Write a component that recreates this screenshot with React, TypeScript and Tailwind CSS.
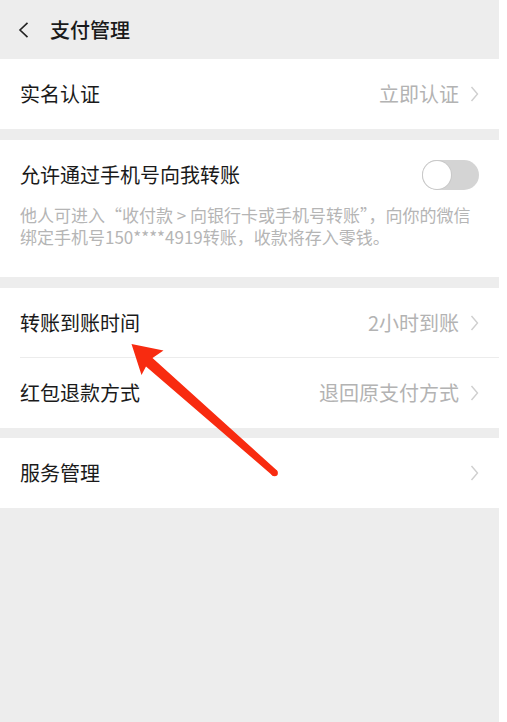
import React from "react";

const font = { fontFamily: '"Noto Sans CJK SC", "Noto Sans", sans-serif' };

function Chevron() {
  return (
    <svg width="9" height="16" viewBox="0 0 9 16" className="ml-[11px] shrink-0">
      <path d="M1.5 1 L7.5 8 L1.5 15" fill="none" stroke="#cfcfcf" strokeWidth="1.4" />
    </svg>
  );
}

function Row({ label, value, divider }: { label: string; value?: string; divider?: boolean }) {
  return (
    <div className="relative flex h-[70px] items-center pl-[20px] pr-[20px]">
      <span className="text-[20px] text-[#1a1a1a] leading-none">{label}</span>
      <span className="ml-auto text-[20px] text-[#b3b3b3] leading-none">{value}</span>
      <Chevron />
      {divider && <div className="absolute bottom-0 left-[20px] right-0 h-px bg-[#ececec]" />}
    </div>
  );
}

export default function App() {
  return (
    <div className="w-[507px] min-h-[722px] bg-white" style={font}>
      <div className="relative w-[499px] min-h-[722px] bg-[#ededed]">
        {/* header */}
        <div className="flex h-[59px] items-center pl-[18px]">
          <svg width="11" height="16" viewBox="0 0 11 16">
            <path d="M9.5 0.8 L2 8 L9.5 15.2" fill="none" stroke="#222" strokeWidth="1.6" />
          </svg>
          <span className="ml-[21px] text-[20px] font-medium text-[#1a1a1a] leading-none">支付管理</span>
        </div>

        <div className="bg-white">
          <Row label="实名认证" value="立即认证" />
        </div>

        <div className="mt-[11px] bg-white pl-[20px] pr-[19px] pt-[20px] pb-[29px]">
          <div className="flex h-[30px] items-center">
            <span className="text-[20px] text-[#1a1a1a] leading-none">允许通过手机号向我转账</span>
            <div className="relative ml-auto mr-[1px] h-[30px] w-[57px] rounded-full bg-[#d4d4d4]">
              <div className="absolute left-[1px] top-[1px] h-[28px] w-[28px] rounded-full bg-white shadow-[0_0_0_1px_#c8c8c8]" />
            </div>
          </div>
          <div className="mt-[14px] text-[17px] text-[#b5b5b5]">
            <div className="h-[22px] leading-[22px] whitespace-nowrap">
              他人可进入“收付款 &gt; 向银行卡或手机号转账”，向你的微信
            </div>
            <div className="h-[22px] leading-[22px] whitespace-nowrap">
              绑定手机号150****4919转账，收款将存入零钱。
            </div>
          </div>
        </div>

        <div className="mt-[11px] bg-white">
          <Row label="转账到账时间" value="2小时到账" divider />
          <Row label="红包退款方式" value="退回原支付方式" />
        </div>

        <div className="mt-[10px] bg-white">
          <Row label="服务管理" />
        </div>

        {/* annotation arrow */}
        <svg className="absolute left-0 top-0 pointer-events-none" width="499" height="722" viewBox="0 0 499 722">
          <polygon
            points="131.5,344 163.5,350.5 152.5,358 277,470.5 272.5,475.5 146,366.5 141.5,375"
            fill="#f82b10"
          />
          <circle cx="274.6" cy="473" r="3.3" fill="#f82b10" />
        </svg>
      </div>
    </div>
  );
}
